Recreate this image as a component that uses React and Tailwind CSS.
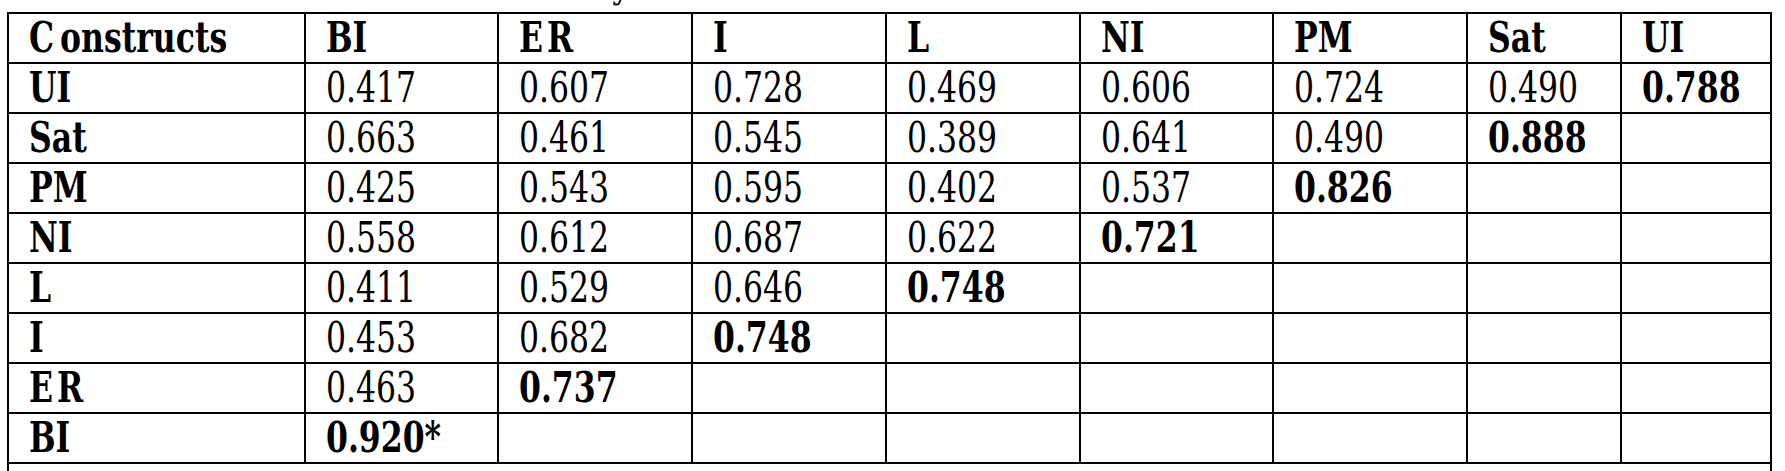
const headers = ["Constructs", "BI", "ER", "I", "L", "NI", "PM", "Sat", "UI"];

// each row: label, then values; a value wrapped in [] is the bold diagonal
const rows = [
  ["UI", "0.417", "0.607", "0.728", "0.469", "0.606", "0.724", "0.490", ["0.788"]],
  ["Sat", "0.663", "0.461", "0.545", "0.389", "0.641", "0.490", ["0.888"], ""],
  ["PM", "0.425", "0.543", "0.595", "0.402", "0.537", ["0.826"], "", ""],
  ["NI", "0.558", "0.612", "0.687", "0.622", ["0.721"], "", "", ""],
  ["L", "0.411", "0.529", "0.646", ["0.748"], "", "", "", ""],
  ["I", "0.453", "0.682", ["0.748"], "", "", "", "", ""],
  ["ER", "0.463", ["0.737"], "", "", "", "", "", ""],
  ["BI", ["0.920*"], "", "", "", "", "", "", ""],
];

function Cell({ children, bold }) {
  return (
    <div className={`h-[50px] border-r-2 border-b-2 border-black pl-5 leading-[48px] whitespace-nowrap ${bold ? "font-bold" : "font-normal"}`}>
      <span className="inline-block scale-y-120">{children}</span>
    </div>
  );
}

function Spaced({ text }) {
  // the PDF leaves a gap after the first letter of these two labels
  if (text === "Constructs") {
    return (
      <>
        <span className="mr-[6px]">C</span>onstructs
      </>
    );
  }
  if (text === "ER") {
    return (
      <>
        <span className="mr-[4px]">E</span>R
      </>
    );
  }
  return text;
}

export default function App() {
  return (
    <div className="min-h-screen bg-white text-black font-['DejaVu_Serif_Condensed','DejaVu_Serif',serif] font-stretch-condensed text-[35px] overflow-hidden">
      <div className="w-[630px] text-right leading-[50px] h-[50px] -mt-[39px] mb-[1px]">
        Discriminant validity
      </div>

      <div className="ml-[7px] w-fit border-l-2 border-t-2 border-black grid grid-cols-[297px_193px_194px_194px_194px_193px_194px_154px_150px]">
        {headers.map((h) => (
          <Cell key={h} bold>
            <Spaced text={h} />
          </Cell>
        ))}
        {rows.map((row, ri) =>
          row.map((v, ci) => {
            if (ci === 0) {
              return (
                <Cell key={`${ri}-${ci}`} bold>
                  <Spaced text={v} />
                </Cell>
              );
            }
            const bold = Array.isArray(v);
            return (
              <Cell key={`${ri}-${ci}`} bold={bold}>
                {bold ? v[0] : v}
              </Cell>
            );
          })
        )}
      </div>

      <div className="ml-[7px] w-[1765px] border-l-2 border-r-2 border-black px-5 pt-[5px] leading-[40px] text-justify text-[#777]">
        Note: diagonal values in bold are the square roots of the AVE; off-diagonal values are the correlations between the constructs.
      </div>
    </div>
  );
}
